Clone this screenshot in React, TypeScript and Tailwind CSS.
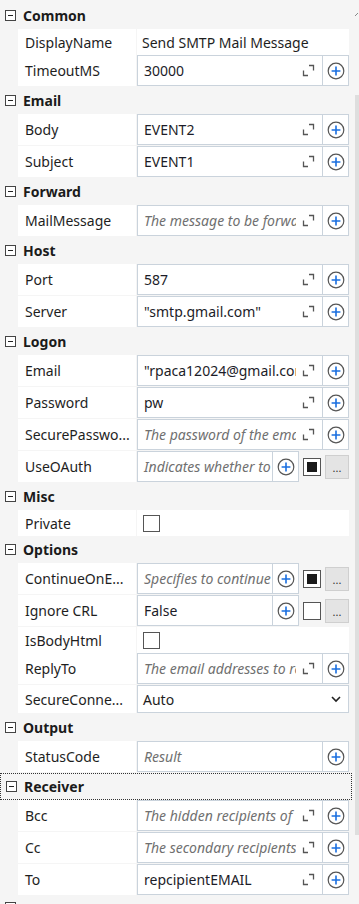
import React from "react";

const font = { fontFamily: '"Noto Sans", "Open Sans", Arial, sans-serif' };

const PlusIcon = () => (
  <svg width="18" height="18" viewBox="0 0 18 18" fill="none">
    <circle cx="9" cy="9" r="7.8" stroke="#555" strokeWidth="1.2" />
    <path d="M9 4.6v8.8M4.6 9h8.8" stroke="#1a6fe0" strokeWidth="1.6" />
  </svg>
);

const ExpandIcon = () => (
  <svg width="13" height="13" viewBox="0 0 13 13" fill="none">
    <path d="M1.5 6.5v5h4.5" stroke="#555" strokeWidth="1.3" />
    <path d="M7 1.5h4.5v5" stroke="#555" strokeWidth="1.3" />
  </svg>
);

const Header = ({ name, focused }: { name: string; focused?: boolean }) => (
  <div
    className={
      "flex items-center h-[27px] w-[352px] " +
      (focused ? "border border-dotted border-[#333]" : "")
    }
  >
    <div className="ml-[5px] w-[11px] h-[11px] border border-[#444] flex items-center justify-center bg-white">
      <div className="w-[5px] h-px bg-[#222]" />
    </div>
    <span className="ml-[7px] text-[14px] font-bold text-[#1b1b1b]">{name}</span>
  </div>
);

const Label = ({ text }: { text: string }) => (
  <div className="ml-[18px] w-[118px] bg-white flex items-center pl-[7px] text-[14px] text-[#1e1e1e] whitespace-nowrap overflow-hidden">
    {text}
  </div>
);

const Field = ({
  value,
  placeholder,
  expand = true,
}: {
  value?: string;
  placeholder?: string;
  expand?: boolean;
}) => (
  <div className="flex-1 min-w-0 flex items-center">
    <div className="flex-1 min-w-0 overflow-hidden whitespace-nowrap pl-[6px] text-[14px]">
      {value ? (
        <span className="text-[#1c1c28]">{value}</span>
      ) : (
        <span className="italic text-[#707070]">{placeholder}</span>
      )}
    </div>
    {expand && (
      <div className="ml-[6px] mr-[7px] flex items-center">
        <ExpandIcon />
      </div>
    )}
  </div>
);

const PlusCell = () => (
  <div className="w-[26px] h-full border-l border-[#cad3dc] flex items-center justify-center">
    <PlusIcon />
  </div>
);

const InputRow = ({
  label,
  value,
  placeholder,
  expand = true,
}: {
  label: string;
  value?: string;
  placeholder?: string;
  expand?: boolean;
}) => (
  <div className="flex h-[31px] mb-px">
    <Label text={label} />
    <div className="ml-px w-[212px] flex border border-[#cad3dc] bg-white">
      <Field value={value} placeholder={placeholder} expand={expand} />
      <PlusCell />
    </div>
  </div>
);

const BoolRow = ({
  label,
  value,
  placeholder,
  checked,
}: {
  label: string;
  value?: string;
  placeholder?: string;
  checked: boolean;
}) => (
  <div className="flex h-[31px] mb-px">
    <Label text={label} />
    <div className="ml-px w-[212px] flex items-center">
      <div className="w-[162px] h-full flex border border-[#cad3dc] bg-white">
        <Field value={value} placeholder={placeholder} expand={false} />
        <PlusCell />
      </div>
      <div className="ml-[4px] w-[18px] h-[18px] border border-[#555] bg-white flex items-center justify-center">
        {checked && <div className="w-[10px] h-[10px] bg-[#1a1a1a]" />}
      </div>
      <div className="ml-[4px] w-[24px] h-[24px] bg-[#e4e4e4] border border-[#cfcfcf] flex items-end justify-center pb-[5px] text-[11px] leading-none text-[#333]">
        ...
      </div>
    </div>
  </div>
);

const CheckRow = ({ label }: { label: string }) => (
  <div className="flex h-[26px]">
    <Label text={label} />
    <div className="ml-px w-[212px] bg-white flex items-center pl-[6px]">
      <div className="w-[17px] h-[17px] border border-[#555] bg-white" />
    </div>
  </div>
);

export default function App() {
  return (
    <div className="w-[359px] h-[904px] overflow-hidden bg-[#f5f5f5] flex" style={font}>
      <div className="w-[355px] pt-[2px]">
        <Header name="Common" />
        <div className="flex h-[26px]">
          <Label text="DisplayName" />
          <div className="ml-px w-[212px] bg-white flex items-center pl-[5px] text-[14px] text-[#1e1e1e] whitespace-nowrap">
            Send SMTP Mail Message
          </div>
        </div>
        <InputRow label="TimeoutMS" value="30000" />

        <Header name="Email" />
        <InputRow label="Body" value="EVENT2" />
        <InputRow label="Subject" value="EVENT1" />

        <Header name="Forward" />
        <InputRow label="MailMessage" placeholder="The message to be forwarded" />

        <Header name="Host" />
        <InputRow label="Port" value="587" />
        <InputRow label="Server" value={'"smtp.gmail.com"'} />

        <Header name="Logon" />
        <InputRow label="Email" value={'"rpaca12024@gmail.com"'} />
        <InputRow label="Password" value="pw" />
        <InputRow label="SecurePasswo..." placeholder="The password of the email account" />
        <BoolRow label="UseOAuth" placeholder="Indicates whether to use OAuth" checked />

        <Header name="Misc" />
        <CheckRow label="Private" />

        <Header name="Options" />
        <BoolRow label="ContinueOnE..." placeholder="Specifies to continue executing" checked />
        <BoolRow label="Ignore CRL" value="False" checked={false} />
        <CheckRow label="IsBodyHtml" />
        <InputRow label="ReplyTo" placeholder="The email addresses to reply to" />
        <div className="flex h-[28px] mb-px">
          <Label text="SecureConne..." />
          <div className="ml-px w-[212px] flex items-center border border-[#cad3dc] bg-white pl-[5px] pr-[6px] text-[14px] text-[#1e1e1e]">
            <span className="flex-1">Auto</span>
            <svg width="12" height="12" viewBox="0 0 12 12" fill="none">
              <path d="M2 4l4 4 4-4" stroke="#222" strokeWidth="1.6" />
            </svg>
          </div>
        </div>

        <Header name="Output" />
        <InputRow label="StatusCode" placeholder="Result" expand={false} />

        <Header name="Receiver" focused />
        <InputRow label="Bcc" placeholder="The hidden recipients of the email" />
        <InputRow label="Cc" placeholder="The secondary recipients of the email" />
        <InputRow label="To" value="repcipientEMAIL" />

        <div className="h-[6px]" />
        <div className="ml-[5px] w-[11px] h-[11px] border border-[#444] bg-white" />
      </div>
      <div className="w-[4px] flex flex-col">
        <svg width="4" height="8" viewBox="0 0 4 8" className="mt-[10px]">
          <path d="M0 6l3-3" stroke="#888" strokeWidth="1" />
        </svg>
        <div className="mt-[77px] h-[740px] bg-[#dedede]" />
      </div>
    </div>
  );
}
